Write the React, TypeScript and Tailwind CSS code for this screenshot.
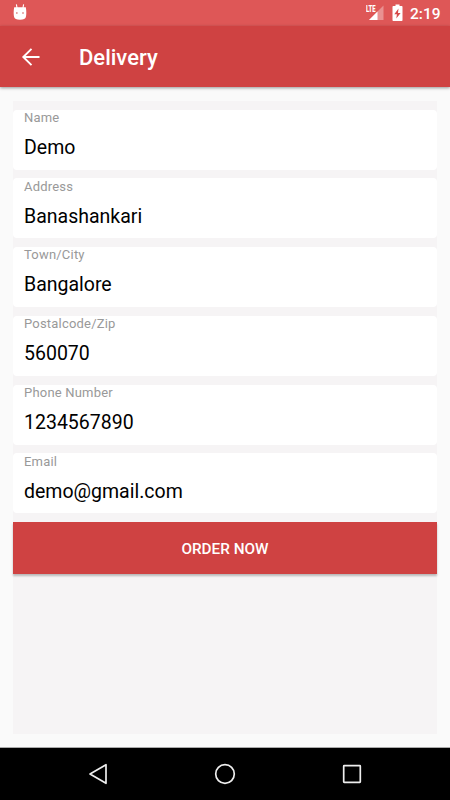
const fields = [
  { label: 'Name', value: 'Demo' },
  { label: 'Address', value: 'Banashankari' },
  { label: 'Town/City', value: 'Bangalore' },
  { label: 'Postalcode/Zip', value: '560070' },
  { label: 'Phone Number', value: '1234567890' },
  { label: 'Email', value: 'demo@gmail.com' },
]

function StatusBar() {
  return (
    <div className="flex h-[26px] shrink-0 items-center bg-[#de5757] pl-3 pr-[9px] text-white">
      <svg className="h-[18px] w-4" viewBox="0 0 16 18" fill="none">
        <path d="M4.4.3 5.2 5M11.6.3 10.8 5" stroke="#fff" strokeWidth="1.1" />
        <path d="M2.2 3.3h11.6c.7 3.5.7 7.5 0 10-.5 1.500-2 2.400-5.800 2.400s-5.300-.9-5.800-2.400c-.7-2.500-.7-6.500 0-10Z" fill="#fff" />
        <circle cx="4.9" cy="9" r=".75" fill="#c94545" />
        <circle cx="11" cy="9" r=".75" fill="#c94545" />
      </svg>
      <div className="ml-auto flex items-center">
        <div className="relative h-[18px] w-5">
          <svg className="h-[18px] w-5" viewBox="0 0 20 18">
            <path d="M19.5 1.5V16H5Z" fill="#fff" opacity=".35" />
            <path d="M13.5 7.5V16H5Z" fill="#fff" />
          </svg>
          <span className="absolute left-0.5 top-0 origin-left scale-x-[.62] text-[9.5px] font-black leading-[10px]">LTE</span>
        </div>
        <svg className="ml-2 h-[18px] w-[11px]" viewBox="0 0 11 18">
          <path d="M3.5.5h4V2h2.200c.5 0 .8.3.8.8v13.400c0 .5-.3.8-.8.8H1.300c-.5 0-.8-.3-.8-.8V2.800c0-.5.3-.8.8-.8h2.200Z" fill="#fff" />
          <path d="M6.500 4.500 2.300 10.300h2.600L4.300 14.500l4.300-5.500H6Z" fill="#d64b4b" />
        </svg>
        <span className="ml-[7px] mt-[2px] w-[31px] text-[15.5px] font-medium leading-[18px]">2:19</span>
      </div>
    </div>
  )
}

function Field({ label, value }: { label: string; value: string }) {
  return (
    <div className="h-[60px] rounded-[4px] bg-white pl-[11px] pt-[.4px]">
      <div className="text-[13px] leading-4 tracking-[.2px] text-[#999]">{label}</div>
      <div className="mt-[10px] text-[19.5px] leading-6 text-black">{value}</div>
    </div>
  )
}

export default function App() {
  return (
    <div className="flex h-[800px] w-[450px] flex-col overflow-hidden bg-[#fafafa] font-['Roboto',sans-serif]">
      <StatusBar />
      <header className="flex h-[61px] shrink-0 items-center bg-[#cf4242] pl-[21px] text-white shadow-[0_1px_3px_rgba(0,0,0,.4)]">
        <svg className="h-5 w-5" viewBox="0 0 20 20" fill="none" stroke="#fff" strokeWidth="1.9">
          <path d="M18.5 10h-16M10.5 1.8 2.3 10l8.2 8.2" />
        </svg>
        <h1 className="ml-[38px] mt-[2px] text-[22px] font-medium leading-7">Delivery</h1>
      </header>

      <main className="mx-[13px] mt-[14px] h-[633px] shrink-0 bg-[#f6f4f5] pt-[8.6px]">
        <div className="flex flex-col gap-[8.75px]">
          {fields.map((f) => (
            <Field key={f.label} label={f.label} value={f.value} />
          ))}
        </div>
        <button className="mt-[8.6px] h-[52.5px] w-full bg-[#cf4242] pt-[2px] text-[15.3px] font-medium text-white shadow-[0_2px_2px_rgba(0,0,0,.25)]">
          ORDER NOW
        </button>
      </main>

      <nav className="mt-auto flex h-[53px] shrink-0 items-center border-t border-[#aaa] bg-black px-[88px]">
        <svg className="h-[22px] w-5" viewBox="0 0 20 22" fill="none" stroke="#eee" strokeWidth="1.7">
          <path d="M18 1.7v18.6L2 11Z" strokeLinejoin="round" />
        </svg>
        <svg className="mx-auto h-[22px] w-[22px]" viewBox="0 0 22 22" fill="none" stroke="#eee" strokeWidth="1.7">
          <circle cx="11" cy="11" r="9.3" />
        </svg>
        <svg className="h-5 w-5" viewBox="0 0 20 20" fill="none" stroke="#eee" strokeWidth="1.7">
          <rect x="1.7" y="1.7" width="16.6" height="16.6" rx=".5" />
        </svg>
      </nav>
    </div>
  )
}
